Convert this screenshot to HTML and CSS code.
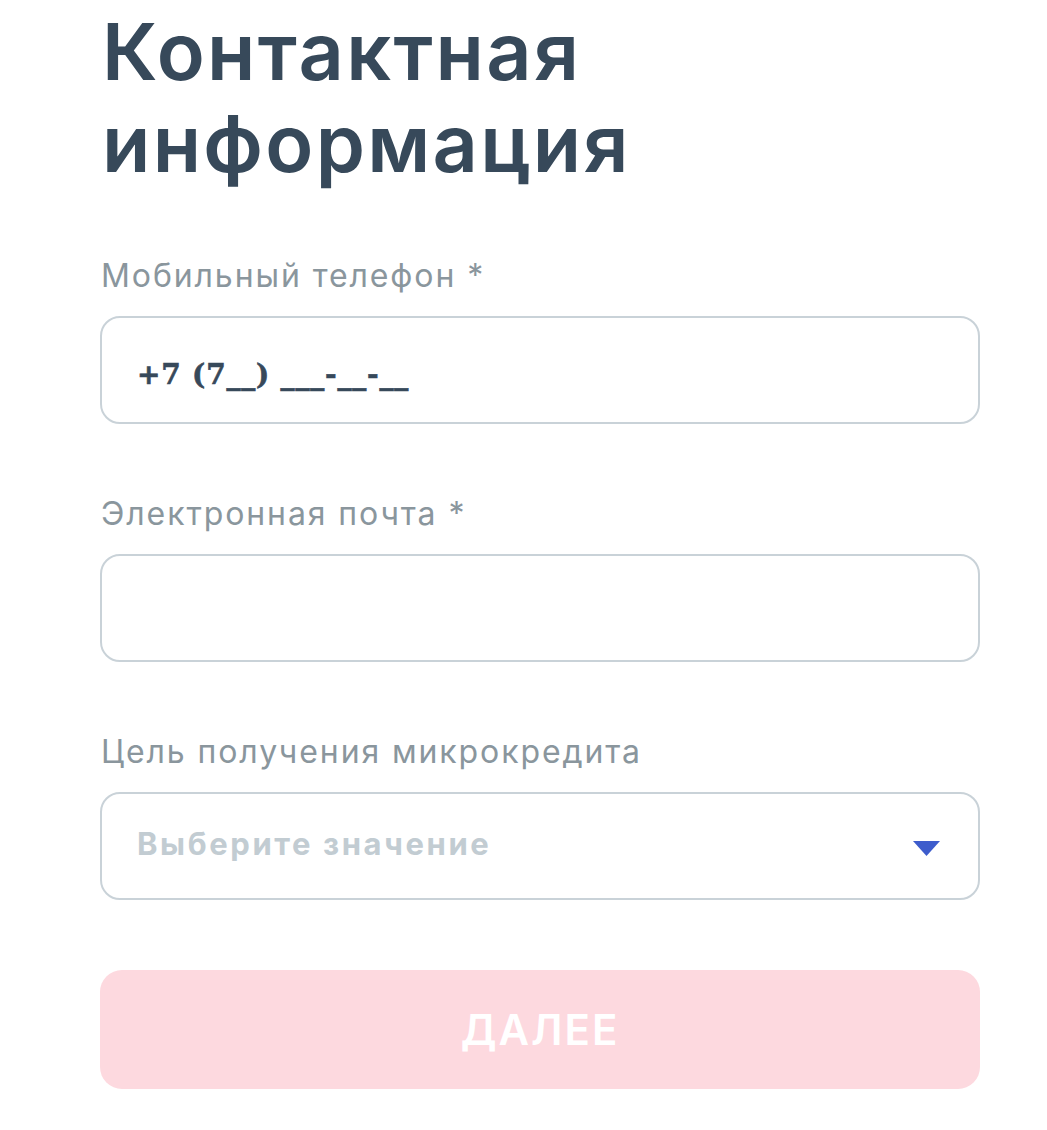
FILE: index.html
```html
<!DOCTYPE html>
<html lang="ru">
<head>
<meta charset="utf-8">
<title>Контактная информация</title>
<link rel="stylesheet" href="styles.css">
</head>
<body>
<main class="page">
  <h1 class="title">Контактная<br>информация</h1>
  <form class="form">
    <div class="field">
      <label class="label">Мобильный телефон *</label>
      <div class="box"><span class="phone">+7 (7__) ___-__-__</span></div>
    </div>
    <div class="field">
      <label class="label">Электронная почта *</label>
      <div class="box"></div>
    </div>
    <div class="field">
      <label class="label">Цель получения микрокредита</label>
      <div class="box select">
        <span class="placeholder">Выберите значение</span>
        <svg class="caret" width="27" height="15" viewBox="0 0 27 15"><path d="M0 0H27L13.5 15Z" fill="#3d5ccc"/></svg>
      </div>
    </div>
    <div class="button">ДАЛЕЕ</div>
  </form>
</main>
</body>
</html>
```
FILE: styles.css
```css
html, body {
  margin: 0;
  padding: 0;
  background: #ffffff;
}
body {
  font-family: "Inter", "Open Sans", sans-serif;
}
.page {
  width: 880px;
  margin-left: 100px;
  padding-top: 5px;
}
.title {
  margin: 0;
  font-size: 79px;
  line-height: 92px;
  font-weight: 600;
  color: #37495a;
  letter-spacing: 2.3px;
  padding-left: 2px;
}
.form {
  display: flex;
  flex-direction: column;
  margin-top: 67px;
}
.field {
  display: flex;
  flex-direction: column;
  margin-bottom: 70px;
}
.field:last-of-type {
  margin-bottom: 67px;
}
.label {
  font-size: 32px;
  line-height: 40px;
  color: #8a969d;
  font-weight: 400;
  letter-spacing: 1.9px;
  padding-left: 1px;
}
.box {
  margin-top: 20px;
  height: 108px;
  box-sizing: border-box;
  border: 2px solid #c9d2d8;
  border-radius: 20px;
  display: flex;
  align-items: center;
  padding: 0 38px 0 35px;
}
.phone {
  font-family: "DejaVu Serif", serif;
  font-weight: 900;
  font-size: 28px;
  letter-spacing: 0.8px;
  color: #37495a;
  -webkit-text-stroke: 0.6px #37495a;
  padding-top: 8px;
}
.select {
  justify-content: space-between;
}
.placeholder {
  font-size: 31px;
  font-weight: 700;
  color: #c2ccd2;
  letter-spacing: 2.6px;
  padding-bottom: 5px;
}
.caret {
  display: block;
  margin-top: 4px;
}
.button {
  height: 119px;
  border-radius: 22px;
  background: #fdd9df;
  color: #ffffff;
  font-size: 42px;
  font-weight: 600;
  letter-spacing: 2px;
  display: flex;
  align-items: center;
  justify-content: center;
}
```
